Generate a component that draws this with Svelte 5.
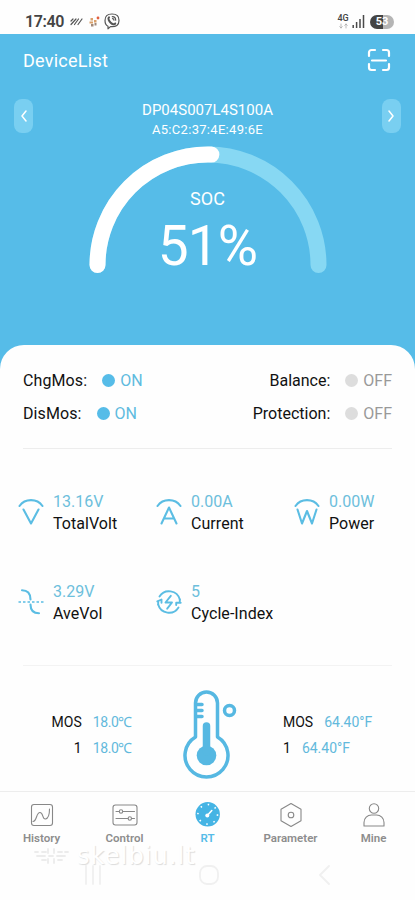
<script lang="ts">
  let soc = $state(51)
  let current = $state('RT')

  const left = [
    { name: 'ChgMos', on: true },
    { name: 'DisMos', on: true },
  ]
  const right = [
    { name: 'Balance', on: false },
    { name: 'Protection', on: false },
  ]
  const metrics = [
    { icon: 'volt', value: '13.16V', label: 'TotalVolt' },
    { icon: 'amp', value: '0.00A', label: 'Current' },
    { icon: 'watt', value: '0.00W', label: 'Power' },
    { icon: 'ave', value: '3.29V', label: 'AveVol' },
    { icon: 'cycle', value: '5', label: 'Cycle-Index' },
  ]
  const temps = [
    { name: 'MOS', c: '18.0℃', f: '64.40°F' },
    { name: '1', c: '18.0℃', f: '64.40°F' },
  ]
  const tabs = ['History', 'Control', 'RT', 'Parameter', 'Mine']

  const arc = 'M8.5 119a110.5 110.5 0 0 1 221 0'
</script>

{#snippet status(s: { name: string; on: boolean })}
  <div class="switch" class:on={s.on}>
    <span class="name">{s.name}:</span>
    <i></i>
    <span class="state">{s.on ? 'ON' : 'OFF'}</span>
  </div>
{/snippet}

<div class="screen">
  <div class="statusbar">
    <span class="clock">17:40</span>
    <svg class="waves" width="13" height="9" viewBox="0 0 13 9">
      <path d="M1 4l2-2M1 7.500l5-5.500M4.500 7.500l4-5.500M8 7.500l4-5.500" />
    </svg>
    <svg class="spark" width="11" height="11" viewBox="0 0 11 11">
      <path d="M1.500 2h2.500v2.500H1.500zM.500 5.500h3.500V7.500H.500zM5 4h2.500v2.500H5z" fill="#d9a06a" />
      <path d="M2 8h2.500v2.500H2zM5.500 7h2v2.500h-2z" fill="#a08878" />
      <circle cx="9" cy="2" r="1.400" fill="#e2603f" />
    </svg>
    <svg class="viber" width="16" height="17" viewBox="0 0 16 17">
      <path d="M8 1C3 1 1 3.200 1 7.500c0 3 1 4.900 3 5.700v2.600l2.500-2.200c5.700.5 8.500-1.600 8.500-6.100S13 1 8 1z" />
      <path class="phone" d="M5 4.300c-1.500 1 .2 3.900 1.700 5.400s3.800 2.400 4.500.8" />
      <path d="M8.300 3.700c2.100.1 3.400 1.500 3.400 3.500M8.500 5.600c.9.100 1.400.7 1.500 1.500" />
    </svg>
    <span class="gap"></span>
    <span class="net">
      <b>4G</b>
      <svg width="9" height="6" viewBox="0 0 9 6">
        <path d="M2 1v4M.700 3.700L2 5l1.300-1.300M7 5V1M5.700 2.300L7 1l1.300 1.300" />
      </svg>
    </span>
    <svg class="signal" width="13" height="13" viewBox="0 0 13 13">
      <path d="M1.200 10v3M4.600 7v6M8 4v9M11.500 0v13" />
    </svg>
    <span class="battery">53</span>
  </div>

  <div class="hero">
    <div class="titlebar">
      <h1>DeviceList</h1>
      <svg width="24" height="24" viewBox="0 0 24 24">
        <path d="M2 8V4.500A2.500 2.500 0 0 1 4.500 2H8M16 2h3.500A2.500 2.500 0 0 1 22 4.500V8M22 16v3.500a2.500 2.500 0 0 1-2.500 2.500H16M8 22H4.500A2.500 2.500 0 0 1 2 19.500V16M5 12.500h14" />
      </svg>
    </div>
    <div class="device">
      <button class="arrow" aria-label="Previous">
        <svg width="8" height="12" viewBox="0 0 8 12"><path d="M6 1L2 6l4 5" /></svg>
      </button>
      <div class="ident">
        <div class="id">DP04S007L4S100A</div>
        <div class="mac">A5:C2:37:4E:49:6E</div>
      </div>
      <button class="arrow" aria-label="Next">
        <svg width="8" height="12" viewBox="0 0 8 12"><path d="M2 1l4 5-4 5" /></svg>
      </button>
    </div>
    <div class="gauge">
      <svg width="238" height="128" viewBox="0 0 238 128">
        <path class="track" d={arc} />
        <path class="fill" d={arc} pathLength="100" stroke-dasharray="{soc} 200" />
      </svg>
      <div class="reading">
        <div class="soc">SOC</div>
        <div class="percent">{soc}%</div>
      </div>
    </div>
  </div>

  <div class="panel">
    <div class="switches">
      <div class="col">
        {#each left as s}{@render status(s)}{/each}
      </div>
      <div class="col end">
        {#each right as s}{@render status(s)}{/each}
      </div>
    </div>

    <div class="metrics">
      {#each metrics as m}
        <div class="metric">
          <svg width="26" height="30" viewBox="0 0 26 30">
            {#if m.icon === 'volt'}
              <path d="M1.500 9C7 1.200 19 1.200 24.500 9M5.500 12.500l7.500 14 7.500-14" />
            {:else if m.icon === 'amp'}
              <path d="M1.500 9C7 1.200 19 1.200 24.500 9M5.500 26.500L13 10.500 20.500 26.500M8 21.500h10" />
            {:else if m.icon === 'watt'}
              <path d="M1.500 9C7 1.200 19 1.200 24.500 9M3.500 12.500l4.500 14L13 14l5 12.500L22.500 12.500" />
            {:else if m.icon === 'ave'}
              <path d="M4 3.200c5.500 0 8.500 3 8.500 9.300M12.500 17.500c0 6 3 8.800 8.500 8.800" />
              <path class="dash" d="M.500 15h25" />
            {:else}
              <g class="cycle">
                <path d="M3.500 9.500A11.200 11.200 0 0 1 23.800 12.500M22.500 20.500A11.200 11.200 0 0 1 2.200 17.500" />
                <path d="M2.200 17.500v-3M1.300 14.300l4.200-1.800v3.300M23.800 12.500v3M24.700 15.700h-4.500v2.300" />
                <path class="bolt" d="M14.800 8.800l-5.300 6.700h6.500l-4.800 6.200" />
              </g>
            {/if}
          </svg>
          <div>
            <div class="value">{m.value}</div>
            <div class="label">{m.label}</div>
          </div>
        </div>
      {/each}
    </div>

    <div class="temps">
      <div class="celsius">
        {#each temps as t}
          <div class="temp"><span>{t.name}</span><em>{t.c}</em></div>
        {/each}
      </div>
      <svg width="56" height="90" viewBox="0 0 56 90">
        <path class="glass" d="M13.500 47V13a11 11 0 0 1 22 0v34a21.500 21.500 0 1 1-22 0z" />
        <path class="glass" d="M14 14.500h6M14 20.500h6M14 26.500h6" />
        <circle cx="24.500" cy="65.500" r="9.800" />
        <path class="mercury" d="M24.500 36v26" />
        <circle class="glass" cx="47.500" cy="20.500" r="5" />
      </svg>
      <div class="fahrenheit">
        {#each temps as t}
          <div class="temp"><span>{t.name}</span><em>{t.f}</em></div>
        {/each}
      </div>
    </div>
  </div>

  <div class="tabs">
    {#each tabs as tab}
      <button class="tab" class:active={current === tab} onclick={() => (current = tab)}>
        <svg width="26" height="26" viewBox="0 0 26 26">
          {#if tab === 'History'}
            <rect x="2.500" y="2.500" width="21" height="21" rx="2.500" />
            <path d="M4 19.500c4 0 3-9 7-9 3.500 0 2 7 5.500 6.500 2.500-.5 4-4 4-10" />
          {:else if tab === 'Control'}
            <rect x="1" y="3" width="24" height="20" rx="2.500" />
            <path d="M4 9.500h3.200M10.800 9.500H22.500M4 16.500h12M19.600 16.500h2.900" />
            <circle cx="9" cy="9.500" r="1.700" />
            <circle cx="17.800" cy="16.500" r="1.700" />
          {:else if tab === 'RT'}
            <circle class="dial" cx="12.700" cy="12.300" r="12.200" />
            <circle class="ticks" cx="12.700" cy="12.300" r="9.800" pathLength="24" />
            <circle class="hub" cx="12.300" cy="13.500" r="2" />
            <path class="hand" d="M12.300 13.500l4.500-5" />
          {:else if tab === 'Parameter'}
            <path d="M13 1.500l10 5.700v11.600l-10 5.700-10-5.700V7.200z" />
            <circle cx="13" cy="13" r="2.800" />
          {:else}
            <circle cx="13" cy="6.500" r="4.700" />
            <path d="M3 24v-3.500a7.500 7.500 0 0 1 7.500-7.500h5a7.500 7.500 0 0 1 7.500 7.500V24z" />
          {/if}
        </svg>
        <span>{tab}</span>
      </button>
    {/each}
  </div>

  <div class="navbar">
    <svg width="20" height="20" viewBox="0 0 20 20"><path d="M3 1v18M10 1v18M17 1v18" /></svg>
    <svg width="20" height="20" viewBox="0 0 20 20"><rect x="1" y="1" width="18" height="18" rx="7" /></svg>
    <svg width="20" height="20" viewBox="0 0 20 20"><path d="M14 1L5 10l9 9" /></svg>
    <div class="watermark">
      <svg width="36" height="18" viewBox="0 0 36 18">
        <path d="M1 5h3M8 5h4M14 2v4M20 2v4M24 5h4M31 5h3M3 9h8M15 9h4M23 9h8M8 13h4M14 12v4M20 12v4M24 13h4" />
      </svg>
      <span>skelbiu.lt</span>
    </div>
  </div>
</div>

<style>
  :global(body) {
    margin: 0;
    background: #fff;
  }
  .screen {
    width: 415px;
    height: 900px;
    display: flex;
    flex-direction: column;
    overflow: hidden;
    font-family: Roboto, sans-serif;
    color: #111;
    background: #fefefe;
  }
  svg {
    display: block;
    flex: none;
    fill: none;
    stroke-linecap: round;
    stroke-linejoin: round;
  }
  button {
    padding: 0;
    border: 0;
    background: none;
    font: inherit;
    color: inherit;
  }

  .statusbar {
    height: 34px;
    box-sizing: border-box;
    padding: 9px 21px 0 25px;
    display: flex;
    align-items: center;
  }
  .clock {
    font-size: 16px;
    font-weight: 600;
    letter-spacing: -0.7px;
    letter-spacing: -0.4px;
    color: #444;
    width: 45px;
  }
  .waves {
    stroke: #555;
    stroke-width: 1.2;
  }
  .spark {
    margin-left: 6px;
  }
  .viber {
    margin-left: 4px;
    stroke: #555;
    stroke-width: 1.2;
  }
  .phone {
    stroke-width: 2;
  }
  .gap {
    flex: 1;
  }
  .net {
    display: flex;
    flex-direction: column;
    align-items: center;
    width: 12px;
    color: #444;
  }
  .net b {
    font-size: 9px;
    line-height: 9px;
    font-weight: 500;
  }
  .net svg {
    stroke: #aaa;
    stroke-width: 0.8;
  }
  .signal {
    margin: 0 5px 0 3px;
    stroke: #4a4a4a;
    stroke-width: 1.5;
    stroke-linecap: butt;
  }
  .battery {
    width: 24px;
    height: 14px;
    border-radius: 7px;
    background: linear-gradient(90deg, #444 53%, #b5b5b5 53%);
    color: #fff;
    font-size: 11px;
    font-weight: 700;
    line-height: 14px;
    text-align: center;
  }

  .hero {
    height: 335px;
    flex: none;
    background: #56bce8;
    color: #fff;
  }
  .titlebar {
    height: 52px;
    padding: 0 24px 0 23px;
    display: flex;
    align-items: center;
    justify-content: space-between;
  }
  h1 {
    margin: 0;
    font-size: 18px;
    font-weight: 400;
    letter-spacing: 0.25px;
  }
  .titlebar svg {
    stroke: #fff;
    stroke-width: 2.2;
  }
  .device {
    height: 60px;
    padding: 0 14px;
    display: flex;
    align-items: center;
    justify-content: space-between;
  }
  .arrow {
    width: 19px;
    height: 34px;
    border-radius: 8px;
    background: #79cff1;
    display: flex;
    align-items: center;
    justify-content: center;
  }
  .arrow svg {
    stroke: #fff;
    stroke-width: 1.5;
  }
  .ident {
    text-align: center;
    padding-top: 8px;
  }
  .id {
    font-size: 15px;
    line-height: 19px;
  }
  .mac {
    font-size: 13px;
    line-height: 19px;
    letter-spacing: 0.3px;
  }
  .gauge {
    display: grid;
    justify-content: center;
  }
  .gauge > * {
    grid-area: 1 / 1;
  }
  .gauge path {
    stroke-width: 16;
  }
  .track {
    stroke: #87d8f3;
  }
  .fill {
    stroke: #fff;
  }
  .reading {
    text-align: center;
    padding-top: 42px;
  }
  .soc {
    font-size: 18px;
    line-height: 22px;
  }
  .percent {
    font-size: 55px;
    line-height: 72px;
    letter-spacing: -0.8px;
  }

  .panel {
    flex: none;
    height: 446px;
    margin-top: -24px;
    border-radius: 24px 24px 0 0;
    background: #fefefe;
  }
  .switches {
    margin: 0 23px;
    height: 104px;
    padding-top: 19px;
    box-sizing: border-box;
    display: flex;
    justify-content: space-between;
    border-bottom: 1px solid #ededed;
  }
  .switch {
    display: flex;
    align-items: center;
    height: 33px;
    font-size: 16px;
    color: #999;
  }
  .end .switch {
    justify-content: flex-end;
  }
  .switch .name {
    color: #111;
    letter-spacing: 0.1px;
  }
  .end .name {
    letter-spacing: 0;
  }
  .switch i {
    width: 13px;
    height: 13px;
    margin: 0 5px 0 15px;
    border-radius: 50%;
    background: #ddd;
  }
  .switch.on {
    color: #5fbbdf;
  }
  .switch.on i {
    background: #56bce8;
  }

  .metrics {
    display: grid;
    grid-template-columns: repeat(3, 138px);
    grid-auto-rows: 90px;
    margin: 0 0 0 18px;
    padding-top: 42px;
    height: 174px;
  }
  .metric {
    display: flex;
    align-items: flex-start;
    gap: 9px;
  }
  .metric svg {
    margin-top: 6px;
    margin-left: -0.5px;
    margin-right: 0.5px;
    stroke: #5bbde3;
    stroke-width: 2.1;
  }
  .metric .dash {
    stroke-width: 1.6;
    stroke-dasharray: 2.5 2;
    stroke-linecap: butt;
  }
  .cycle {
    stroke-width: 1.9;
  }
  .value {
    font-size: 16px;
    line-height: 22px;
    color: #6dbfdc;
  }
  .label {
    font-size: 16px;
    line-height: 22px;
    letter-spacing: 0.05px;
  }

  .temps {
    margin: 0 23px;
    border-top: 1px solid #f3f3f3;
    display: grid;
    grid-template-columns: 109px 56px auto;
    column-gap: 50px;
    padding-top: 24px;
    height: 100px;
  }
  .celsius,
  .fahrenheit {
    padding-top: 19px;
  }
  .fahrenheit {
    margin-left: -5px;
  }
  .temp {
    display: flex;
    gap: 11px;
    height: 26px;
    line-height: 26px;
    font-size: 14px;
  }
  .celsius .temp {
    justify-content: flex-end;
  }
  .temp em {
    font-style: normal;
    color: #62b9dc;
  }
  .celsius em {
    letter-spacing: -0.4px;
  }
  .temps circle {
    fill: #56b8e2;
  }
  .temps .glass {
    fill: none;
    stroke: #56b8e2;
    stroke-width: 3.5;
  }
  .temps .mercury {
    stroke: #56b8e2;
    stroke-width: 7.5;
  }

  .tabs {
    flex: none;
    height: 58px;
    box-sizing: border-box;
    border-top: 1px solid #ededed;
    padding-top: 10px;
    display: flex;
  }
  .tab {
    flex: 1;
    display: flex;
    flex-direction: column;
    align-items: center;
    gap: 3px;
    font-size: 11.5px;
    line-height: 14px;
    font-weight: 600;
    color: #8d8d8d;
  }
  .tab svg {
    stroke: #888;
    stroke-width: 1.1;
  }
  .tab.active {
    color: #56bce8;
  }
  .tab .dial {
    fill: #45b4e4;
    stroke: none;
  }
  .tab .ticks {
    stroke: #fff;
    stroke-width: 1.6;
    stroke-dasharray: 0.6 2.4;
    stroke-linecap: butt;
  }
  .tab .hub {
    fill: #fff;
    stroke: none;
  }
  .tab .hand {
    stroke: #fff;
    stroke-width: 1.6;
  }

  .navbar {
    position: relative;
    flex: 1;
    display: flex;
    justify-content: space-between;
    padding: 16px 80px 0 83px;
  }
  .navbar > svg {
    stroke: #f0f0f0;
    stroke-width: 1.8;
  }
  .watermark {
    position: absolute;
    left: 34px;
    top: -7px;
    display: flex;
    align-items: center;
    gap: 7px;
    color: #fff;
    font: 24px/28px "DejaVu Sans", sans-serif;
    letter-spacing: 1.1px;
    text-shadow: 1px 1px 1px #dcdcdc;
  }
  .watermark svg {
    stroke: #ececec;
    stroke-width: 1.8;
  }
</style>
